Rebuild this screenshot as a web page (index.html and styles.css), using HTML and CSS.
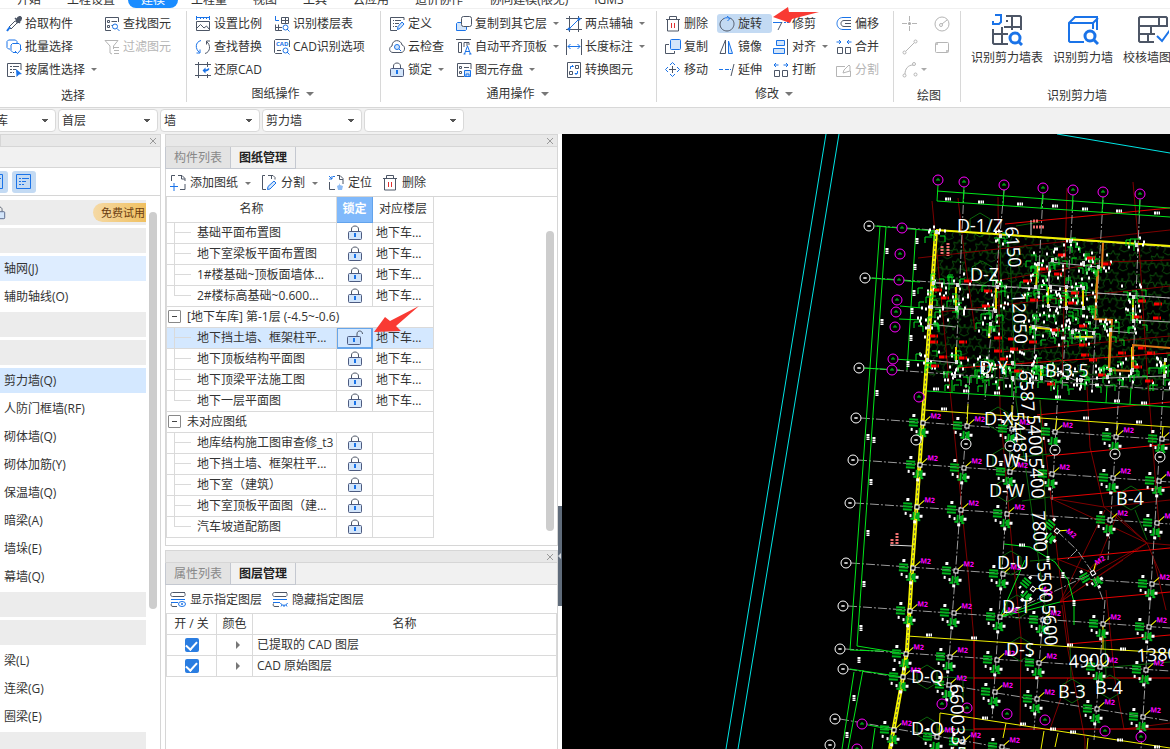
FILE: index.html
```html
<!DOCTYPE html>
<html lang="zh-CN">
<head>
    <meta charset="UTF-8">
    <meta name="viewport" content="width=device-width, initial-scale=1.0">
    <title>建模 - 图纸管理</title>
    <link rel="stylesheet" href="styles.css">
</head>
<body>
    <svg class="sprite" aria-hidden="true">
        <symbol id="i-pick" viewBox="0 0 16 16"><path d="M9 2l5 5M10 5l2-3.500 2-1 1.500 1.500-1 2.500-3 2z" fill="#4d5666" stroke="#4d5666" stroke-width="1.500"/><path d="M9 5L3 11l2 2 6-6" class="d"/><path d="M4 11l-3 4" stroke="#1a73e8" stroke-width="2"/></symbol>
        <symbol id="i-batch" viewBox="0 0 16 16"><path d="M4 10H2.500L1 8.500v-6L2.500 1h7L11 2.500V4" class="b"/><path d="M10 13.500H7L5 11.500V6l1.500-1.500H13L14.500 6v5" class="b"/><path d="M9 12l2.500 2.500L15.500 10" class="b"/></symbol>
        <symbol id="i-attr" viewBox="0 0 16 16"><path d="M15 8V1.500H1.500v13H9M4 4.500h2M7 4.500h6M4 7.500h2M7 7.500h3M4 10.500h2M7 10.500h1" class="d"/><path d="M10 7l6 5-3 .5-2.500 2.500z" fill="#1a73e8"/></symbol>
        <symbol id="i-find" viewBox="0 0 16 16"><path d="M14.500 6V1.500h-13v13H7M3.500 4.500h2v2h-2zM3.500 9.500h2v2h-2zM7.500 5.500H13M7.500 9.500H9" class="d"/><circle cx="11" cy="10.500" r="2.500" class="b"/><path d="M13 12.500l2.500 2.500" class="b"/></symbol>
        <symbol id="i-filter" viewBox="0 0 16 16"><path d="M1 1.500h13L9.500 7v3M6 7v7l2 1M1 1.500L6 7M10 8.500h5M10 11.500h5M10 14.500h5" class="g"/></symbol>
        <symbol id="i-scale" viewBox="0 0 16 16"><path d="M1.500 0v4M14.500 0v4M2 1.500h12M5.500 1v2M8.500 1v2M11.500 1v2" class="b"/><path d="M1.500 14.500v-9h13v9zM2 12l3.500-3.500L9 12l2.500-2L14 13" class="d"/></symbol>
        <symbol id="i-swap" viewBox="0 0 16 16"><path d="M6 1.500C0 3 0 10 4.500 13.500M1.500 14H5v-3.500" class="b"/><path d="M10 14.500c5.500-1.500 6-8.500 1.500-12M15 2h-3.500v3.500" class="d"/></symbol>
        <symbol id="i-restore" viewBox="0 0 16 16"><path d="M3.500 0v16M0 2.500h16M0 13.500h16M12.500 0v5M12.500 12v4" class="d"/><path d="M7.500 8.500l3-3v2c1 0 2-.5 3-1.500l1 1c-1 1.500-2 2.500-4 2.500v2z" fill="#1a73e8"/></symbol>
        <symbol id="i-floor" viewBox="0 0 16 16"><path d="M1.500 0v4.500H5" class="b"/><path d="M7.500 1.500h7v6h-7zM7.500 4.500h7M11.500 1.500v6M1.500 8.500v6H8M1.500 11.500H8M4.500 8.500v6" class="d"/><circle cx="11.500" cy="11.500" r="2.500" class="b"/><path d="M13 13l2.500 2.500" class="b"/></symbol>
        <symbol id="i-cadopt" viewBox="0 0 16 16"><path d="M15.500 8V1.500l-1-1h-13l-1 1v12l1 1H8M3 11.500h4" class="d"/><text x="2" y="7" font-size="6" font-weight="bold" fill="#1a73e8">CAD</text><circle cx="11.500" cy="11.500" r="2.500" class="b"/><path d="M13 13l2.500 2.500" class="b"/></symbol>
        <symbol id="i-define" viewBox="0 0 16 16"><path d="M15 4V1.500H1.500v13H8M4 4.500h1M6 4.500h6M4 7.500h1M6 7.500h4M4 10.500h1M6 10.500h2" class="d"/><path d="M8.500 13.500l.5-3L13 6l2 2-4 4.500z" class="bf"/></symbol>
        <symbol id="i-cloud" viewBox="0 0 16 16"><path d="M4 13.500C0 13.500-.5 8 3 7 3 0 12 0 13 6c4 1 3 7.500-1 7.500z" class="d"/><circle cx="8" cy="8" r="2.500" class="bf"/><path d="M10 10l2 2" class="b"/></symbol>
        <symbol id="i-lock" viewBox="0 0 16 16"><path d="M4.500 6V4c0-4 7-4 7 0v2" class="d"/><rect x="1.500" y="6.500" width="13" height="8" rx="1" fill="#d3e5fa" stroke="#4d5b80"/><path d="M8 8v4" stroke="#1a73e8" stroke-width="2"/></symbol>
        <symbol id="i-unlock" viewBox="0 0 16 16"><path d="M10 6V4c0-4 5.500-4 5.500 0" class="d"/><rect x=".5" y="6.500" width="13" height="8" rx="1" fill="#c2dcfb" stroke="#4d5b80"/><path d="M7 8v4" stroke="#1a73e8" stroke-width="2"/></symbol>
        <symbol id="i-copyfloor" viewBox="0 0 16 16"><path d="M5 6.500H1.500l-1 1v7h9l1-1V11" class="bf"/><rect x="5.500" y=".5" width="10" height="10" rx="2" fill="#fff" stroke="#4d5666"/></symbol>
        <symbol id="i-aligntop" viewBox="0 0 16 16"><path d="M0 .5h15M2.500 3.500h3v10h-3zM8 8V3.500h3V7M11 3.500h2V6" class="d"/><path d="M8.500 15L11.500 7l3 8M9.500 12.500h4M7.500 15h2M13 15h2.500" class="b"/></symbol>
        <symbol id="i-save" viewBox="0 0 16 16"><path d="M15 7V1.500H1.500v13H8M3.500 4.500h2v2h-2zM3.500 9.500h2v2h-2zM8 5.500h5" class="d"/><path d="M8.500 8.500h6v6h-6zM10 14.500V12h3v2" class="bf"/></symbol>
        <symbol id="i-two" viewBox="0 0 16 16"><path d="M3.500 0v16M12.500 0v16M0 2.500h16M0 13.500h16" class="d"/><path d="M2 14L14 2" class="b"/><circle cx="3" cy="13" r="1.500" fill="#1a73e8"/><circle cx="13" cy="3" r="1.500" fill="#1a73e8"/></symbol>
        <symbol id="i-length" viewBox="0 0 16 16"><path d="M.5 0v16M15.500 0v16" class="d"/><path d="M2 7.500h12M4.500 5L2 7.500 4.500 10M11.500 5L14 7.500 11.500 10" class="b"/></symbol>
        <symbol id="i-convert" viewBox="0 0 16 16"><path d="M1.500.5h13v15h-13zM9.500 3.500h3v3h-3zM3.500 9.500h3v3h-3z" class="d"/><path d="M4.500 7V4.500h3M6 3l1.500 1.500M11.500 9v2.500H9M9 11.500l1.500 1.500" class="b"/></symbol>
        <symbol id="i-trash" viewBox="0 0 16 16"><path d="M1 3.500h14M4.500 3V.500h7V3M2.500 4v11h11V4" class="d"/><path d="M6.500 7v5M9.500 7v5" stroke="#e03131"/></symbol>
        <symbol id="i-rotate" viewBox="0 0 16 16"><path d="M5 2.500C-2 6 1 15 8 15S18 5 11 2" class="d"/><path d="M5 2.500C7 1 10 2 11 2.500M8 0l3 2.500L8.500 5" class="b"/></symbol>
        <symbol id="i-trim" viewBox="0 0 16 16"><path d="M0 6.500h9M11 6.500h2M14 6.500h2" class="b"/><path d="M9 6L5 14" class="d"/></symbol>
        <symbol id="i-offset" viewBox="0 0 16 16"><path d="M15 1.500H7c-8 0-8 12 0 12h8" class="b"/><path d="M15 4.500H8c-4 0-4 6 0 6h7M9 7.500h6" class="d"/></symbol>
        <symbol id="i-copy" viewBox="0 0 16 16"><path d="M4 5.500H.500v9h9V12" class="d"/><rect x="5.500" y=".5" width="10" height="10" rx="1" class="bf"/></symbol>
        <symbol id="i-mirror" viewBox="0 0 16 16"><path d="M6.500 1v13.500H1z" class="d"/><path d="M9.500 2v12.500h4z" class="bf"/></symbol>
        <symbol id="i-align" viewBox="0 0 16 16"><path d="M3.500 1.500h8v5h-8zM.5 9.500h11v5H.500z" class="bf"/><path d="M14.500 0v16" class="d"/></symbol>
        <symbol id="i-merge" viewBox="0 0 16 16"><path d="M.5 3H5M3 1l2 2-2 2M15.500 3H11M13 1l-2 2 2 2" class="b"/><path d="M1.500 8.500h5v6h-5zM9.500 8.500h5v6h-5z" class="d"/></symbol>
        <symbol id="i-break" viewBox="0 0 16 16"><path d="M1 3h4.500M3 1L1 3l2 2M15 3h-4.500M13 1l2 2-2 2" class="b"/><path d="M1.500 8.500h5v6h-5zM9.500 8.500h5v6h-5z" class="d"/></symbol>
        <symbol id="i-move" viewBox="0 0 16 16"><path d="M7.500 4v7M4 7.500h7" class="d"/><path d="M5 3L7.500.500 10 3M5 12l2.500 2.500L10 12M3 5L.5 7.500 3 10M12 5l2.500 2.500L12 10" class="b"/></symbol>
        <symbol id="i-extend" viewBox="0 0 16 16"><path d="M0 7.500h4M6 7.500h4M11 7.500h1" class="b"/><path d="M15 2l-3 12" class="d"/></symbol>
        <symbol id="i-split" viewBox="0 0 16 16"><path d="M9 4.500H.500v10h14V9M7 11l1-3 5-5 1 1v5z" class="g"/></symbol>
        <symbol id="i-point" viewBox="0 0 16 16"><path d="M7.500 0v5M7.500 10v5M0 7.500h5M10 7.500h5" class="g"/><circle cx="7.500" cy="7.500" r="1.500" fill="#aaa"/></symbol>
        <symbol id="i-circle" viewBox="0 0 16 16"><circle cx="8" cy="8" r="7" class="g"/><circle cx="7" cy="9" r="1.500" class="g"/><path d="M8 8l5-4" class="g"/></symbol>
        <symbol id="i-line" viewBox="0 0 16 16"><circle cx="2.500" cy="13.500" r="1.500" class="g"/><circle cx="13.500" cy="2.500" r="1.500" class="g"/><path d="M4 12l8-8" class="g"/></symbol>
        <symbol id="i-rect" viewBox="0 0 16 16"><rect x="1.500" y="3.500" width="13" height="10" rx="1" class="g"/><circle cx="3" cy="5" r="1" fill="#b5b5b5"/><circle cx="13" cy="12" r="1" fill="#b5b5b5"/></symbol>
        <symbol id="i-arc" viewBox="0 0 16 16"><circle cx="2.500" cy="13.500" r="1.500" class="g"/><circle cx="13.500" cy="12.500" r="1.500" class="g"/><circle cx="12" cy="2" r="1.500" class="g"/><path d="M3 12c0-5 3-9 8-9" class="g"/></symbol>
        <symbol id="i-walltable" viewBox="0 0 32 32"><g fill="none" stroke="#4d5666" stroke-width="2"><path d="M15 2h14l1 1v13M15 7h2M21 2v14M30 13H13M30 16v-3M2 15v14l1 1h14M2 20h15M11 13v17"/><path d="M4 1h6v7l-2 2H2V7" stroke="#1a73e8"/><circle cx="24" cy="24" r="5" stroke="#1a73e8" stroke-width="3"/><path d="M27 27l4 4" stroke="#1a73e8" stroke-width="3"/></g></symbol>
        <symbol id="i-wallbox" viewBox="0 0 32 32"><g fill="none" stroke="#1a73e8" stroke-width="2"><path d="M17 28H3l-1-1V9l6-6h22v13M2 9h24v6M26 9l5-5"/><circle cx="23" cy="22" r="5" stroke-width="3"/><path d="M26 25l5 5" stroke-width="3"/></g></symbol>
        <symbol id="i-wallcheck" viewBox="0 0 32 32"><g fill="none" stroke="#4d5666" stroke-width="2"><path d="M30 13V4l-1-1H3L2 4v23l1 1h14M2 12h28M2 20h16M14 12v8M22 3v9M11 20v8"/><path d="M20 22l5 5 8-11" stroke="#1a73e8"/></g></symbol>
        <symbol id="i-addpage" viewBox="0 0 16 16"><path d="M5 .5H1.500V6M8 .5h4l3 3V6M15 9v5.500h-5M11.500.5V4H15" class="d"/><path d="M0 11.500h8M4 8v8" class="b"/></symbol>
        <symbol id="i-cutpage" viewBox="0 0 16 16"><path d="M5 14.500H1.500V.500H4M7 .5h5l2 2v2M10.500 1v3" class="d"/><path d="M6.500 14.500l.5-3L13 6l2 2-6 6z" class="bf"/></symbol>
        <symbol id="i-locate" viewBox="0 0 16 16"><path d="M1.500 7v7.500H7M9 .5h3l3 3V9M11.500 1v3.500H15" class="d"/><path d="M1 1l3 3M4 1v3H1M7 1.500H5" class="b"/><path d="M10 15l-1-4 2-1v-2l1 2 3 1-1 4z" fill="#8ebcf5"/></symbol>
        <symbol id="i-show" viewBox="0 0 16 16"><path d="M15 .5H2.500c-2.500 0-2.500 4 0 4H14c1.500-1 1.500-3 0-4M1.500 11.500c-1 2 0 3 1.500 3h4" class="d"/><path d="M1 7.500h14M1 10.500h7" class="b"/><ellipse cx="12" cy="12" rx="3.500" ry="2.500" class="b"/><circle cx="12" cy="12" r="1" fill="#1a73e8"/></symbol>
        <symbol id="i-hide" viewBox="0 0 16 16"><path d="M15 .5H2.500c-2.500 0-2.500 4 0 4H14c1.500-1 1.500-3 0-4M1.500 11.500c-1 2 0 3 1.500 3h4" class="d"/><path d="M1 7.500h14M1 10.500h7M8.500 11c1 3 6 3 7 0M10 13l-1 1.500M12 13v2M14 13l1 1.500" class="b"/></symbol>
        <symbol id="i-list" viewBox="0 0 16 16"><path d="M.5.500h14v14H.500zM3 4.500h2M6 4.500h7M3 7.500h2M6 7.500h4M3 10.500h2M6 10.500h2" class="b"/></symbol>
        <symbol id="i-close" viewBox="0 0 8 8"><path d="M1 1l6 6M7 1L1 7" fill="none" stroke="#999"/></symbol>
    </svg>

    <nav class="menu">
        <a href="#">开始</a>
        <a href="#">工程设置</a>
        <a href="#" class="active">建模</a>
        <a href="#">工程量</a>
        <a href="#">视图</a>
        <a href="#">工具</a>
        <a href="#">云应用</a>
        <a href="#">造价协作</a>
        <a href="#">协同建模(限免)</a>
        <a href="#">IGMS</a>
    </nav>

    <header class="ribbon">
        <section class="group group-select">
            <div class="tools">
                <button class="tool"><svg><use href="#i-pick"/></svg>拾取构件</button>
                <button class="tool"><svg><use href="#i-find"/></svg>查找图元</button>
                <button class="tool"><svg><use href="#i-batch"/></svg>批量选择</button>
                <button class="tool" disabled><svg><use href="#i-filter"/></svg>过滤图元</button>
                <button class="tool"><svg><use href="#i-attr"/></svg>按属性选择<i class="caret"></i></button>
            </div>
            <div class="group-label plain">选择</div>
        </section>
        <section class="group group-drawing">
            <div class="tools">
                <button class="tool"><svg><use href="#i-scale"/></svg>设置比例</button>
                <button class="tool"><svg><use href="#i-floor"/></svg>识别楼层表</button>
                <button class="tool"><svg><use href="#i-swap"/></svg>查找替换</button>
                <button class="tool"><svg><use href="#i-cadopt"/></svg>CAD识别选项</button>
                <button class="tool"><svg><use href="#i-restore"/></svg>还原CAD</button>
            </div>
            <button class="group-label">图纸操作<i class="caret big"></i></button>
        </section>
        <section class="group group-common">
            <div class="tools">
                <button class="tool"><svg><use href="#i-define"/></svg>定义</button>
                <button class="tool"><svg><use href="#i-copyfloor"/></svg>复制到其它层<i class="caret"></i></button>
                <button class="tool"><svg><use href="#i-two"/></svg>两点辅轴<i class="caret"></i></button>
                <button class="tool"><svg><use href="#i-cloud"/></svg>云检查</button>
                <button class="tool"><svg><use href="#i-aligntop"/></svg>自动平齐顶板<i class="caret"></i></button>
                <button class="tool"><svg><use href="#i-length"/></svg>长度标注<i class="caret"></i></button>
                <button class="tool"><svg><use href="#i-lock"/></svg>锁定<i class="caret"></i></button>
                <button class="tool"><svg><use href="#i-save"/></svg>图元存盘<i class="caret"></i></button>
                <button class="tool"><svg><use href="#i-convert"/></svg>转换图元</button>
            </div>
            <button class="group-label">通用操作<i class="caret big"></i></button>
        </section>
        <section class="group group-modify">
            <div class="tools">
                <button class="tool"><svg><use href="#i-trash"/></svg>删除</button>
                <button class="tool on"><svg><use href="#i-rotate"/></svg>旋转</button>
                <button class="tool"><svg><use href="#i-trim"/></svg>修剪</button>
                <button class="tool"><svg><use href="#i-offset"/></svg>偏移</button>
                <button class="tool"><svg><use href="#i-copy"/></svg>复制</button>
                <button class="tool"><svg><use href="#i-mirror"/></svg>镜像</button>
                <button class="tool"><svg><use href="#i-align"/></svg>对齐<i class="caret"></i></button>
                <button class="tool"><svg><use href="#i-merge"/></svg>合并</button>
                <button class="tool"><svg><use href="#i-move"/></svg>移动</button>
                <button class="tool"><svg><use href="#i-extend"/></svg>延伸</button>
                <button class="tool"><svg><use href="#i-break"/></svg>打断</button>
                <button class="tool" disabled><svg><use href="#i-split"/></svg>分割</button>
            </div>
            <button class="group-label">修改<i class="caret big"></i></button>
            <svg class="arrow arrow-rotate" viewBox="0 0 46 16"><path d="M0 10L15 0l1 5 30 0-27 7-2 4z" fill="#f93a33"/></svg>
        </section>
        <section class="group group-draw">
            <div class="tools">
                <button class="tool" aria-label="点" disabled><svg><use href="#i-point"/></svg></button>
                <button class="tool" aria-label="圆" disabled><svg><use href="#i-circle"/></svg></button>
                <button class="tool" aria-label="直线" disabled><svg><use href="#i-line"/></svg></button>
                <button class="tool" aria-label="矩形" disabled><svg><use href="#i-rect"/></svg></button>
                <button class="tool" aria-label="弧" disabled><svg><use href="#i-arc"/></svg><i class="caret"></i></button>
            </div>
            <div class="group-label plain">绘图</div>
        </section>
        <section class="group group-wall">
            <div class="big-tools">
                <button class="big-tool"><svg><use href="#i-walltable"/></svg>识别剪力墙表</button>
                <button class="big-tool"><svg><use href="#i-wallbox"/></svg>识别剪力墙</button>
                <button class="big-tool"><svg><use href="#i-wallcheck"/></svg>校核墙图元</button>
            </div>
            <div class="group-label plain">识别剪力墙</div>
        </section>
    </header>

    <div class="filters">
        <select aria-label="单体"><option>地下车库</option></select>
        <select aria-label="楼层"><option>首层</option></select>
        <select aria-label="类别"><option>墙</option></select>
        <select aria-label="构件类型"><option>剪力墙</option></select>
        <select aria-label="构件"><option></option></select>
    </div>

    <main>
        <aside class="nav-panel">
            <div class="panel-bar"><button aria-label="关闭"><svg><use href="#i-close"/></svg></button></div>
            <div class="nav-title"></div>
            <div class="nav-views">
                <button aria-label="大图标"><svg><use href="#i-list"/></svg></button>
                <button aria-label="列表"><svg><use href="#i-list"/></svg></button>
            </div>
            <div class="nav-body">
                <ul class="nav-list">
                    <li class="head trial"><svg><use href="#i-lock"/></svg><span class="badge">免费试用</span></li>
                    <li class="head"></li>
                    <li class="hover">轴网(J)</li>
                    <li>辅助轴线(O)</li>
                    <li class="head"></li>
                    <li class="head"></li>
                    <li class="selected">剪力墙(Q)</li>
                    <li>人防门框墙(RF)</li>
                    <li>砌体墙(Q)</li>
                    <li>砌体加筋(Y)</li>
                    <li>保温墙(Q)</li>
                    <li>暗梁(A)</li>
                    <li>墙垛(E)</li>
                    <li>幕墙(Q)</li>
                    <li class="head"></li>
                    <li class="head"></li>
                    <li>梁(L)</li>
                    <li>连梁(G)</li>
                    <li>圈梁(E)</li>
                    <li class="head"></li>
                </ul>
                <div class="scroll nav-scroll"></div>
            </div>
        </aside>

        <div class="docks">
            <section class="dock dock-drawings">
                <div class="panel-bar"><button aria-label="关闭"><svg><use href="#i-close"/></svg></button></div>
                <div class="tabs">
                    <button>构件列表</button>
                    <button class="active">图纸管理</button>
                </div>
                <div class="dock-tools">
                    <button class="tool"><svg><use href="#i-addpage"/></svg>添加图纸<i class="caret"></i></button>
                    <button class="tool"><svg><use href="#i-cutpage"/></svg>分割<i class="caret"></i></button>
                    <button class="tool"><svg><use href="#i-locate"/></svg>定位</button>
                    <button class="tool"><svg><use href="#i-trash"/></svg>删除</button>
                </div>
                <div class="dock-body">
                    <table class="drawings">
                        <thead>
                            <tr><th class="c-name">名称</th><th class="c-lock">锁定</th><th class="c-floor">对应楼层</th></tr>
                        </thead>
                        <tbody>
                            <tr><td><div class="leaf">基础平面布置图</div></td><td><svg><use href="#i-lock"/></svg></td><td>地下车...</td></tr>
                            <tr><td><div class="leaf">地下室梁板平面布置图</div></td><td><svg><use href="#i-lock"/></svg></td><td>地下车...</td></tr>
                            <tr><td><div class="leaf">1#楼基础~顶板面墙体...</div></td><td><svg><use href="#i-lock"/></svg></td><td>地下车...</td></tr>
                            <tr><td><div class="leaf last">2#楼标高基础~0.600...</div></td><td><svg><use href="#i-lock"/></svg></td><td>地下车...</td></tr>
                            <tr><td colspan="3"><div class="node"><button class="fold" aria-label="折叠"></button>[地下车库] 第-1层 (-4.5~-0.6)</div></td></tr>
                            <tr class="selected"><td><div class="leaf">地下挡土墙、框架柱平...</div></td><td class="current"><svg><use href="#i-unlock"/></svg></td><td>地下车...</td></tr>
                            <tr><td><div class="leaf">地下顶板结构平面图</div></td><td><svg><use href="#i-lock"/></svg></td><td>地下车...</td></tr>
                            <tr><td><div class="leaf">地下顶梁平法施工图</div></td><td><svg><use href="#i-lock"/></svg></td><td>地下车...</td></tr>
                            <tr><td><div class="leaf last">地下一层平面图</div></td><td><svg><use href="#i-lock"/></svg></td><td>地下车...</td></tr>
                            <tr><td colspan="3"><div class="node"><button class="fold" aria-label="折叠"></button>未对应图纸</div></td></tr>
                            <tr><td><div class="leaf">地库结构施工图审查修_t3</div></td><td><svg><use href="#i-lock"/></svg></td><td></td></tr>
                            <tr><td><div class="leaf">地下挡土墙、框架柱平...</div></td><td><svg><use href="#i-lock"/></svg></td><td></td></tr>
                            <tr><td><div class="leaf">地下室（建筑）</div></td><td><svg><use href="#i-lock"/></svg></td><td></td></tr>
                            <tr><td><div class="leaf">地下室顶板平面图（建...</div></td><td><svg><use href="#i-lock"/></svg></td><td></td></tr>
                            <tr><td><div class="leaf last">汽车坡道配筋图</div></td><td><svg><use href="#i-lock"/></svg></td><td></td></tr>
                        </tbody>
                    </table>
                    <div class="scroll dock-scroll"></div>
                    <svg class="arrow arrow-lock" viewBox="0 0 45 27"><path d="M0 26L11 11l5 4L45 0 22 20l5 5z" fill="#f93a33"/></svg>
                </div>
            </section>

            <section class="dock dock-layers">
                <div class="panel-bar"><button aria-label="关闭"><svg><use href="#i-close"/></svg></button></div>
                <div class="tabs">
                    <button>属性列表</button>
                    <button class="active">图层管理</button>
                </div>
                <div class="layers-body">
                    <div class="dock-tools">
                        <button class="tool"><svg><use href="#i-show"/></svg>显示指定图层</button>
                        <button class="tool"><svg><use href="#i-hide"/></svg>隐藏指定图层</button>
                    </div>
                    <table class="layers">
                        <thead>
                            <tr><th class="c-on">开 / 关</th><th class="c-color">颜色</th><th>名称</th></tr>
                        </thead>
                        <tbody>
                            <tr><td><input type="checkbox" id="layer1" checked></td><td><i class="expand"></i></td><td><label for="layer1">已提取的 CAD 图层</label></td></tr>
                            <tr><td><input type="checkbox" id="layer2" checked></td><td><i class="expand"></i></td><td><label for="layer2">CAD 原始图层</label></td></tr>
                        </tbody>
                    </table>
                </div>
            </section>
        </div>

        <div class="splitter"><button aria-label="收起"></button></div>

        <svg id="plan" class="plan" viewBox="562 134 608 615" preserveAspectRatio="xMinYMin slice">
            <defs>
                <pattern id="stars" width="22" height="19" patternUnits="userSpaceOnUse" patternTransform="rotate(4)">
                    <path d="M6 1l2 4 5-1-3 4 3 4-5-1-2 5-2-5-4 1 2-4-2-4 4 1zM17 9l1 4 4-1-2 4 2 3M17 9l-1 4-4-1 2 3-2 4M13 0l4 2 4-2" fill="none" stroke="#0b4f0b"/>
                </pattern>
                <g id="column">
                    <path d="M-14-3h9M-14 0h9M-14 3h9M-3 5v8M0 6v6M-6 12h3M2 5v8h2" fill="none" stroke="#00b41c" stroke-width="2"/>
                    <path d="M-11-7h3M-12 7h2M-7 9h2M3 9h3M-3 15h3" stroke="#fff" stroke-width="3"/>
                    <path d="M2-2l5-5" stroke="#ff0"/>
                    <rect x="-2" y="-2" width="4" height="4" fill="#000" stroke="#fff"/>
                    <text x="7" y="-5" class="tag">M2</text>
                </g>
                <g id="axis">
                    <circle r="5" fill="#000" stroke="currentColor"/>
                    <path d="M-2 0h4M0-1v2" stroke="currentColor"/>
                </g>
                <g id="axis-inner">
                    <circle r="5" fill="#000" stroke="currentColor"/>
                    <path d="M-2 0h4M-1-1h2" stroke="#00c81e"/>
                </g>
            </defs>
        </svg>
    </main>

    <script src="plan.js"></script>
</body>
</html>
```
FILE: styles.css
```css
* {
    box-sizing: border-box;
}

body {
    margin: 0;
    height: 100vh;
    display: flex;
    flex-direction: column;
    overflow: hidden;
    background: #fff;
    color: #333;
    font-family: "Open Sans", "Noto Sans CJK SC", sans-serif;
    font-size: 12px;
    line-height: 18px;
}

button, select, input {
    font: inherit;
    color: inherit;
    margin: 0;
}

button {
    padding: 0;
    border: none;
    background: none;
    white-space: nowrap;
}

.sprite {
    display: none;
}

/* 图标线条 */
.d { fill: none; stroke: #4d5666; }
.b { fill: none; stroke: #1a73e8; }
.bf { fill: #d3e5fa; stroke: #1a73e8; }
.g { fill: none; stroke: #b5b5b5; }

.caret {
    border: 3px solid transparent;
    border-top-color: #777;
    border-bottom: 0;
    margin-left: 3px;
}

.caret.big {
    border-width: 4px 4px 0;
}

/* 菜单 */
.menu {
    flex: none;
    height: 9px;
    display: flex;
    align-items: flex-end;
    padding-left: 4px;
    border-bottom: 1px solid #f0f0f0;
}

.menu a {
    padding: 0 13px;
    line-height: 16px;
    color: #333;
    text-decoration: none;
    white-space: nowrap;
}

.menu .active {
    background: #1a8cff;
    color: #fff;
    border-radius: 8px;
}

/* 功能区 */
.ribbon {
    flex: none;
    display: flex;
    height: 99px;
    padding-top: 2px;
    border-bottom: 1px solid #d8d8d8;
}

.group {
    flex: none;
    height: 91px;
    padding: 3px 0 0 8px;
    border-right: 1px solid #d8d8d8;
    display: flex;
    flex-direction: column;
    position: relative;
}

.tools {
    flex: none;
    display: grid;
    grid-auto-rows: 19px;
    row-gap: 4px;
    height: 65px;
}

.group-select { width: 187px; padding-left: 6px; }
.group-select .tools { grid-template-columns: 98px 80px; }
.group-select .group-label { padding-right: 46px; }
.group-drawing { width: 194px; }
.group-drawing .tools { grid-template-columns: 79px 106px; }
.group-common { width: 276px; }
.group-common .tools { grid-template-columns: 67px 110px 90px; }
.group-modify { width: 237px; }
.group-modify .tools { grid-template-columns: 54px 54px 63px 57px; }
.group-draw { width: 67px; }
.group-draw .tools { grid-template-columns: 32px 24px; }
.group-draw .group-label { padding-right: 4px; }
.group-wall { padding: 3px 10px 0; border-right: none; }
.group-wall .group-label { padding-right: 0; }

.tool {
    display: flex;
    align-items: center;
    gap: 3px;
}

.tool svg {
    flex: none;
    width: 16px;
    height: 16px;
}

.tool:disabled {
    color: #b5b5b5;
}

.tool:disabled .caret {
    margin-left: 0;
    border-top-color: #aaa;
}

.tool.on {
    background: #c3daf3;
    border-radius: 3px;
    margin: 0 1px 0 -2px;
    padding-left: 2px;
}

.group-label {
    flex: none;
    display: flex;
    justify-content: center;
    align-items: center;
    gap: 3px;
    margin-top: 6px;
    padding-right: 10px;
}

.group-label.plain {
    margin-top: 8px;
}

.big-tools {
    flex: none;
    display: flex;
    gap: 10px;
    height: 65px;
}

.big-tool {
    display: flex;
    flex-direction: column;
    align-items: center;
    gap: 3px;
}

.big-tool svg {
    width: 32px;
    height: 32px;
}

.arrow {
    position: absolute;
    pointer-events: none;
}

.arrow-rotate {
    left: 116px;
    top: -4px;
    width: 46px;
    height: 16px;
    z-index: 2;
}

/* 楼层、构件筛选 */
.filters {
    flex: none;
    display: flex;
    gap: 2px;
    height: 26px;
    padding: 1px 0 2px;
    margin-left: -44px;
    background: #f1f1f1;
}

.filters select {
    appearance: none;
    width: 100px;
    height: 23px;
    padding: 0 16px 0 3px;
    border: 1px solid #d9d9d9;
    border-radius: 4px;
    background-color: #fff;
    background-image: linear-gradient(to bottom left, #555 50%, transparent 50%), linear-gradient(to bottom right, #555 50%, transparent 50%);
    background-repeat: no-repeat;
    background-size: 3px 4px;
    background-position: right 10px top 9px, right 7px top 9px;
}

main {
    flex: 1;
    min-height: 0;
    display: flex;
}

.panel-bar {
    flex: none;
    display: flex;
    justify-content: flex-end;
    align-items: center;
    height: 13px;
    padding-right: 3px;
    background: #e8e8e8;
    border: 1px solid #d6d6d6;
}

.panel-bar button, .panel-bar svg {
    display: block;
    width: 8px;
    height: 8px;
}

.scroll {
    flex: none;
    width: 8px;
    border-radius: 4px;
    background: #cdcdcd;
}

/* 导航栏 */
.nav-panel {
    flex: none;
    width: 161px;
    display: flex;
    flex-direction: column;
    border-right: 1px solid #d6d6d6;
}

.nav-panel .panel-bar {
    border-right: none;
}

.nav-title {
    flex: none;
    height: 21px;
    background: #f1f1f1;
    border-bottom: 1px solid #d6d6d6;
}

.nav-views {
    flex: none;
    display: flex;
    gap: 4px;
    height: 28px;
    padding-top: 3px;
    margin-left: -16px;
    border-bottom: 1px solid #d6d6d6;
}

.nav-views button {
    width: 24px;
    height: 22px;
    background: #c3daf3;
    border-radius: 3px;
}

.nav-views svg {
    display: block;
    width: 16px;
    height: 16px;
    margin: 0 auto;
}

.nav-body {
    flex: 1;
    min-height: 0;
    display: flex;
    gap: 3px;
    padding-top: 4px;
}

.nav-list {
    width: 146px;
    margin: 0;
    padding: 0;
    list-style: none;
}

.nav-list li {
    height: 25px;
    margin-bottom: 3px;
    padding-left: 4px;
    line-height: 25px;
}

.nav-list .head { background: #ececec; }
.nav-list .hover { background: #deedff; }
.nav-list .selected { background: #d4e8ff; }

.nav-list .trial {
    display: flex;
    justify-content: space-between;
    align-items: center;
    padding-left: 0;
}

.trial svg {
    width: 14px;
    height: 14px;
    margin-left: -8px;
}

.badge {
    padding: 0 1px 0 8px;
    font-size: 11px;
    line-height: 19px;
    border-radius: 10px 0 0 10px;
    background: linear-gradient(90deg, #f5d9a5, #f0c060);
    color: #6b3d10;
}

.nav-scroll {
    height: 397px;
    margin-top: 12px;
}

/* 停靠面板 */
.docks {
    flex: none;
    width: 397px;
    padding-left: 4px;
    display: flex;
    flex-direction: column;
    gap: 4px;
}

.dock {
    display: flex;
    flex-direction: column;
}

.dock-layers {
    flex: 1;
}

.tabs {
    flex: none;
    display: flex;
    height: 22px;
    background: #f1f1f1;
    border: solid #d6d6d6;
    border-width: 0 1px 1px;
}

.tabs button {
    width: 66px;
    margin: 0 0 -1px -1px;
    border: 1px solid #c4c8d0;
    border-top: none;
    background: #e3e3e3;
    color: #888;
}

.tabs .active {
    background: #f1f1f1;
    color: #222;
    font-weight: bold;
}

.dock-tools {
    flex: none;
    display: flex;
    align-items: center;
    gap: 10px;
    height: 28px;
    padding: 1px 0 0 4px;
    border: solid #d6d6d6;
    border-width: 0 1px 1px;
}

.dock-tools .tool {
    gap: 4px;
}

.dock-body {
    display: flex;
    align-items: flex-start;
    justify-content: space-between;
    height: 349px;
    border: solid #d6d6d6;
    border-width: 0 1px 1px;
    position: relative;
}

.dock-scroll {
    height: 300px;
    margin: 34px 3px 0 0;
}

table {
    border-collapse: collapse;
    table-layout: fixed;
}

th, td {
    padding: 0;
    height: 21px;
    border: 1px solid #dadada;
    font-weight: normal;
    line-height: 20px;
    white-space: nowrap;
    overflow: hidden;
}

.drawings {
    width: 268px;
}

.drawings th {
    height: 25px;
    border-top: none;
}

.c-name { width: 170px; }
.c-lock { width: 36px; }

.drawings th.c-lock {
    background: #80b9fb;
    border: 1px solid #62a3ec;
    border-top: none;
    color: #fff;
    font-weight: bold;
}

.drawings td svg {
    display: block;
    width: 16px;
    height: 16px;
    margin: 0 auto;
}

.drawings td:last-child:not([colspan]) {
    padding-left: 3px;
}

.drawings .selected td {
    background: #d4e8ff;
}

.drawings .selected .current {
    box-shadow: inset 0 0 0 1px #66a5ea;
    border-color: #66a5ea;
}

/* 树形连线 */
.leaf {
    height: 20px;
    padding-left: 30px;
    background: linear-gradient(#dadada, #dadada) 7px 0 / 1px 100% no-repeat, linear-gradient(#dadada, #dadada) 7px 9px / 17px 1px no-repeat;
}

.leaf.last {
    background-size: 1px 10px, 17px 1px;
}

.node {
    display: flex;
    align-items: center;
    gap: 6px;
    height: 20px;
    padding-left: 1px;
}

.fold {
    width: 13px;
    height: 13px;
    border: 1px solid #888;
    border-radius: 1px;
    background: linear-gradient(#444, #444) center / 5px 1px no-repeat;
}

.arrow-lock {
    left: 208px;
    top: 109px;
    width: 45px;
    height: 27px;
}

.layers-body {
    flex: 1;
    border: solid #d6d6d6;
    border-width: 0 1px;
}

.layers-body .dock-tools {
    border: none;
}

.layers {
    width: 100%;
}

.c-on { width: 50px; }
.c-color { width: 36px; }

.layers td:nth-child(-n+2) {
    text-align: center;
}

.layers td:last-child {
    padding-left: 4px;
}

.layers input {
    appearance: none;
    display: block;
    width: 14px;
    height: 14px;
    margin: 0 auto;
    border-radius: 2px;
    background: #2a7de1;
}

.layers input::before {
    content: "";
    display: block;
    width: 5px;
    height: 9px;
    margin: 0 auto;
    border: solid #fff;
    border-width: 0 2px 2px 0;
    transform: translateY(1px) rotate(42deg);
}

.layers label {
    display: block;
}

.expand {
    display: inline-block;
    border: 4px solid transparent;
    border-left-color: #777;
    border-right: 0;
    margin-left: 6px;
}

.splitter {
    flex: none;
    width: 4px;
}

.splitter button {
    display: flex;
    align-items: center;
    width: 4px;
    height: 100px;
    margin-top: 372px;
    background: #5f6b7a;
}

.splitter button::before {
    content: "";
    border: 3px solid transparent;
    border-right-color: #d0d4da;
    border-left: 0;
}

/* 图纸 */
.plan {
    flex: 1;
    min-width: 0;
    height: 100%;
    background: #000;
}

.plan text {
    fill: #fff;
    font-size: 18px;
}

.plan .tag {
    fill: #f0f;
    font-size: 7px;
    font-weight: bold;
}
```
FILE: plan.js
```js
const NS = 'http://www.w3.org/2000/svg';
const plan = document.getElementById('plan');

function add(name, attrs, text) {
    const el = document.createElementNS(NS, name);
    for (const key in attrs) el.setAttribute(key, attrs[key]);
    if (text) el.textContent = text;
    plan.appendChild(el);
}

function lines(list, color, width, dash) {
    add('path', {
        d: list.map(p => 'M' + p.join(' ')).join(''),
        fill: 'none', stroke: color, 'stroke-width': width || 1, 'stroke-dasharray': dash || 'none'
    });
}

// 红线边界
lines([[826, 134, 726, 749], [839, 134, 738, 749], [1057, 134, 1170, 153]], '#00e5e5');

add('path', { d: 'M936 231L1170 247V392L925 376z', fill: 'url(#stars)' });

// 坡道和地形线
lines([
    [932, 201, 949, 380, 967, 560, 974, 640],
    [958, 198, 965, 260, 975, 330],
    [998, 197, 1000, 407, 1012, 547, 1021, 637, 1020, 727],
    [1067, 188, 1062, 380],
    [1040, 400, 1058, 560, 1070, 650],
    [1133, 182, 1140, 260, 1147, 370, 1160, 540],
    [1087, 387, 1090, 447, 1104, 507, 1147, 543],
    [918, 258, 1060, 242, 1170, 230], [940, 312, 1170, 286],
    [1000, 280, 1105, 262, 1170, 260], [1000, 352, 1170, 336],
    [1050, 498, 1104, 507, 1170, 500], [1050, 498, 1147, 543, 1093, 573],
    [1147, 543, 1060, 602, 1105, 510], [1147, 543, 1117, 515, 1093, 573],
    [1147, 543, 1170, 545], [1147, 543, 1163, 580], [1060, 602, 1123, 560],
    [1060, 602, 1098, 560, 1093, 573, 1057, 559], [1154, 560, 1166, 610],
    [1062, 605, 1068, 650, 1085, 740, 1085, 749], [1106, 590, 1115, 680, 1124, 729],
    [1068, 678, 1050, 729], [1124, 729, 1170, 723]
], '#7d0000');
lines([
    [1005, 224, 1170, 208], [957, 368, 1170, 353], [1037, 415, 1170, 402],
    [1047, 456, 1170, 444], [1050, 498, 1170, 487], [1057, 559, 1170, 548],
    [1060, 602, 1170, 592], [1068, 644, 1170, 635], [974, 640, 974, 749],
    [974, 678, 1170, 678], [974, 729, 1170, 729]
], '#e60000');

// 轴线
lines([
    [877, 226, 1170, 247], [872, 278, 1170, 298], [865, 368, 1170, 390],
    [861, 418, 1170, 440], [858, 460, 1170, 482], [855, 503, 1170, 524],
    [851, 563, 1170, 585], [848, 606, 1170, 628], [845, 649, 1170, 671],
    [848, 669, 1170, 721], [840, 719, 1010, 749],
    [964, 190, 956, 360], [1004, 190, 985, 400], [1043, 195, 1033, 380],
    [1073, 200, 1062, 390], [1103, 200, 1092, 390], [1140, 200, 1132, 390],
    [970, 376, 946, 700], [1015, 376, 992, 720], [1058, 390, 1052, 500],
    [1045, 590, 1034, 730], [1120, 376, 1108, 560], [1105, 600, 1094, 740], [1164, 376, 1141, 749],
    [1057, 531, 1077, 550, 1093, 573, 1103, 600], [1077, 550, 1067, 560], [1000, 617, 1093, 573]
], '#999', 1, '9 2 2 2');

// 尺寸线
lines([
    [880, 226, 850, 650, 880, 651], [886, 227, 857, 646, 906, 654], [854, 672, 842, 749], [863, 670, 848, 749],
    [916, 229, 907, 370], [875, 226, 935, 231], [870, 278, 920, 282], [863, 368, 900, 370],
    [893, 359, 925, 361], [900, 306, 922, 308], [899, 319, 922, 320],
    [937, 191, 1170, 208], [937, 201, 1170, 217],
    [938, 185, 937, 201], [964, 187, 963, 203], [1004, 190, 1003, 206], [1043, 193, 1041, 209],
    [1073, 195, 1072, 211], [1103, 197, 1102, 213], [1140, 199, 1139, 215],
    [927, 391, 1170, 407], [952, 380, 952, 393], [985, 380, 985, 395], [1012, 380, 1012, 397],
    [1058, 385, 1057, 400], [1107, 386, 1106, 403], [1131, 388, 1130, 404],
    [850, 669, 903, 677], [863, 724, 894, 730], [875, 728, 872, 749],
    [1004, 544, 1030, 547, 1055, 562, 1068, 580, 1074, 602, 1074, 625],
    [1000, 617, 1025, 560], [1000, 617, 1060, 602], [1000, 617, 1045, 600]
], '#00e61a');
lines([
    [1010, 250, 1016, 400, 1050, 640], [1000, 240, 1004, 390], [1040, 400, 1048, 560],
    [1020, 457, 1050, 454], [1022, 501, 1050, 497], [1135, 510, 1147, 540], [1030, 561, 1056, 559],
    [1016, 226, 1040, 222], [1070, 645, 1071, 678], [1105, 640, 1106, 676], [937, 677, 974, 678], [937, 729, 974, 730],
    [963, 680, 963, 700], [1100, 668, 1170, 662]
], '#0a640a');
[[980, 225], [982, 273], [998, 419], [1003, 460], [1007, 490], [1011, 563], [1017, 607], [1020, 649], [927, 677], [927, 729],
 [1072, 691], [1110, 687], [1131, 498], [1058, 370], [985, 370]].forEach(([x, y]) => {
    lines([[x, y - 12, x + 10, y - 6, x + 10, y + 6, x, y + 12, x - 10, y + 6, x - 10, y - 6, x, y - 12]], '#0a640a');
});

// 外墙
const wall = [[936, 231, 927, 360, 912, 570, 907, 650, 903, 677, 890, 749]];
lines(wall, '#f5f500', 4);
lines(wall, '#555', 1, '3 2');
lines([[936, 230, 1170, 246]], '#f5f500', 2);
lines([
    [924, 410, 1170, 427], [907, 636, 1103, 649, 1170, 653], [940, 713, 1170, 748], [1103, 649, 1103, 624],
    [940, 713, 939, 735], [1006, 723, 1003, 738], [1044, 731, 1041, 749], [1058, 733, 1055, 747], [1088, 738, 1087, 749],
    [968, 404, 967, 426], [1012, 405, 1012, 429], [1057, 418, 1055, 432], [1118, 424, 1116, 437], [1163, 427, 1162, 439]
], '#f0f000');
lines([
    [1038, 264, 1036, 287], [1048, 287, 1048, 306], [1066, 287, 1066, 308], [1083, 289, 1083, 308],
    [956, 287, 956, 307], [996, 288, 996, 310], [1133, 298, 1133, 320], [1098, 268, 1096, 293],
    [990, 325, 989, 338], [1074, 337, 1093, 337], [1110, 332, 1109, 370], [1132, 347, 1132, 370],
    [956, 347, 956, 362], [1041, 365, 1041, 380], [1165, 360, 1164, 376], [1029, 327, 1050, 329]
], '#e6d800', 2);
lines([
    [1103, 243, 1102, 267, 1098, 268, 1095, 319, 1112, 320, 1109, 370, 1132, 371],
    [1133, 371, 1133, 345, 1170, 348]
], '#e07818', 2);
lines([
    [933, 283, 1035, 288], [931, 307, 995, 311], [1049, 285, 1083, 288], [1049, 262, 1049, 286],
    [1050, 262, 1098, 267], [1045, 306, 1083, 309], [1097, 293, 1170, 298], [1110, 331, 1134, 333], [1133, 320, 1170, 322],
    [928, 324, 956, 327], [1030, 325, 1050, 328, 1054, 338], [1072, 329, 1094, 332, 1094, 338, 1072, 338, 1072, 329],
    [927, 360, 957, 363], [1012, 365, 1041, 366, 1075, 380, 1108, 378, 1164, 376]
], '#aaa');

// 密集配筋区
let seed = 7;
const rnd = n => {
    seed = (seed * 16807) % 2147483647;
    return seed % n;
};
const green = [], white = [], boxes = [];
[[936, 232, 1], [1000, 236, 1], [1070, 241, 1], [1136, 245, 1], [1038, 264], [1052, 260], [1083, 263], [1098, 267],
 [933, 283], [957, 285], [997, 287], [1035, 287], [1050, 287], [1066, 287], [1083, 288], [931, 307], [956, 308],
 [995, 311], [1048, 306], [1066, 308], [1083, 308], [1133, 297], [1133, 321], [990, 324], [928, 327], [1033, 327],
 [1053, 333], [1072, 332], [1093, 333], [1110, 330], [927, 360], [956, 362], [983, 368], [1012, 363], [1041, 367],
 [1067, 378], [1110, 370], [1132, 370], [1165, 360], [987, 376], [1012, 378], [1041, 378], [1080, 380], [1107, 377],
 [1164, 376], [954, 376]].forEach(([x, y, small]) => {
    const r = small ? 7 : 11;
    boxes.push([x - 1, y, x + 2, y]);
    for (let i = 0; i < (small ? 4 : 6); i++) {
        const gx = x - r + rnd(2 * r), gy = y - r + rnd(2 * r), s = rnd(2) ? 5 : -5;
        green.push([gx, gy, gx + s, gy, gx + s, gy + 6]);
    }
    for (let i = 0; i < (small ? 6 : 9); i++) {
        const wx = x - r - 1 + rnd(2 * r + 3), wy = y - r - 1 + rnd(2 * r + 3);
        white.push([wx, wy, wx + 2, wy]);
    }
});
lines(white, '#fff', 3);
lines(green, '#00e020');
lines(boxes, '#ddd', 4);

const red = [[1062, 255], [1091, 258], [1107, 264], [1027, 281], [1058, 274], [1044, 269], [968, 281], [938, 290], [945, 298],
 [988, 291], [986, 306], [1034, 300], [1075, 293], [1072, 303], [1142, 301], [1158, 304], [1138, 317], [1157, 318],
 [1083, 326], [1056, 330], [934, 336], [934, 342], [963, 342], [963, 358], [943, 357], [935, 366], [998, 338], [1012, 339],
 [1033, 342], [1014, 349], [998, 351], [1004, 359], [1083, 345], [1085, 355], [1093, 360], [1122, 353], [1151, 353],
 [1142, 348], [1018, 371], [1102, 375], [1138, 367], [1149, 381], [1051, 384]].map(([x, y]) => [x - 4, y, x + 4, y]);
lines(red, '#f00', 3, '5 .5 1 .5');

// 标注数字
lines([[948, 199], [981, 202], [1020, 204], [1055, 206], [1085, 209], [1119, 211], [1157, 213],
 [936, 389], [966, 391], [997, 393], [1058, 397], [1117, 401], [1144, 403], [944, 409], [1086, 418], [1139, 422],
 [929, 635], [974, 638], [1123, 649], [985, 718], [1023, 724], [1053, 729], [1073, 732], [1120, 740], [1157, 747],
 [1022, 545], [1070, 645]].map(([x, y]) => [x - 3, y, x + 3, y]), '#fff', 3, '2 .5');
lines([[887, 251], [882, 322], [877, 393], [868, 437], [874, 440], [871, 482], [868, 533], [864, 584], [861, 628],
 [859, 660], [854, 698], [847, 735], [917, 241], [915, 267], [914, 293], [912, 311], [911, 338], [908, 364],
 [1048, 559], [1063, 575], [1074, 603]].map(([x, y]) => [x, y - 3, x, y + 3]), '#fff', 3, '2 .5');
lines([[942, 246, 942, 255], [948, 243, 948, 256], [892, 539, 892, 546], [897, 533, 897, 545], [1033, 221, 1039, 221],
 [1033, 227, 1044, 227]], '#f07070', 3, '2 1');
lines([[890, 545, 912, 546], [1031, 220, 1031, 235]], '#ddd');

// 柱
[[923, 423], [967, 426], [1012, 429], [1055, 432], [1116, 437], [1162, 439],
 [920, 465], [964, 468], [1010, 472], [1052, 474], [1113, 478], [1159, 481],
 [917, 507], [961, 510], [1007, 514], [1057, 531, 40], [1110, 520], [1157, 523],
 [913, 568], [956, 571], [1003, 574], [1093, 573, -30], [1152, 584], [1033, 589, 40],
 [910, 611], [954, 613], [1000, 617], [1043, 620], [1103, 624], [1149, 627],
 [906, 654], [950, 657], [997, 660], [1039, 663], [1100, 667], [1146, 670],
 [903, 677], [949, 685], [995, 692], [1037, 699], [1097, 709], [1143, 717],
 [894, 730], [937, 737], [963, 742], [1002, 747]].forEach(([x, y, a]) => {
    add('use', { href: '#column', transform: `translate(${x} ${y}) rotate(${a || 3})` });
});

// 轴号
const axes = (id, list, color) => list.forEach(([x, y]) => add('use', { href: id, x, y, color }));
axes('#axis', [[869, 226], [865, 278], [859, 368], [856, 418], [853, 460], [850, 503], [846, 563], [843, 606], [840, 649],
 [843, 669], [835, 719], [830, 745], [916, 440], [966, 444], [1010, 446], [1055, 450], [1115, 454], [1160, 457]], '#fff');
axes('#axis-inner', [[938, 180], [964, 182], [1004, 185], [1043, 188], [1073, 190], [1103, 192], [1140, 194],
 [902, 228], [900, 254], [899, 280], [897, 300], [896, 312], [895, 327], [893, 359], [892, 370], [919, 397],
 [942, 704], [967, 708], [1007, 714], [1045, 720], [1105, 731], [1141, 737], [862, 724], [857, 749]], '#f0f');

[['D-1/Z', 957, 232], ['D-Z', 970, 281], ['D-Y', 979, 374], ['B-3-5', 1045, 377], ['D-X', 984, 425], ['D-W', 985, 467],
 ['D-W', 989, 497], ['B-4', 1116, 505], ['D-U', 997, 569], ['D-T', 1002, 613], ['D-S', 1006, 656],
 ['D-Q', 911, 683], ['D-O', 911, 735], ['B-3', 1058, 698], ['B-4', 1095, 694],
 ['4900', 1069, 668, -3], ['1380', 1137, 662, -3],
 ['6150', 1005, 227, 85], ['12050', 1012, 293, 87], ['6587', 1019, 371, 86], ['54487', 1011, 412, 86],
 ['5400', 1027, 415, 86], ['5400', 1029, 458, 86], ['7800', 1032, 511, 87], ['5500', 1037, 562, 86],
 ['5600', 1042, 605, 86], ['6600335', 950, 684, 88]].forEach(([t, x, y, a]) => {
    add('text', { transform: `translate(${x} ${y}) rotate(${a || 0})` }, t);
});
```
